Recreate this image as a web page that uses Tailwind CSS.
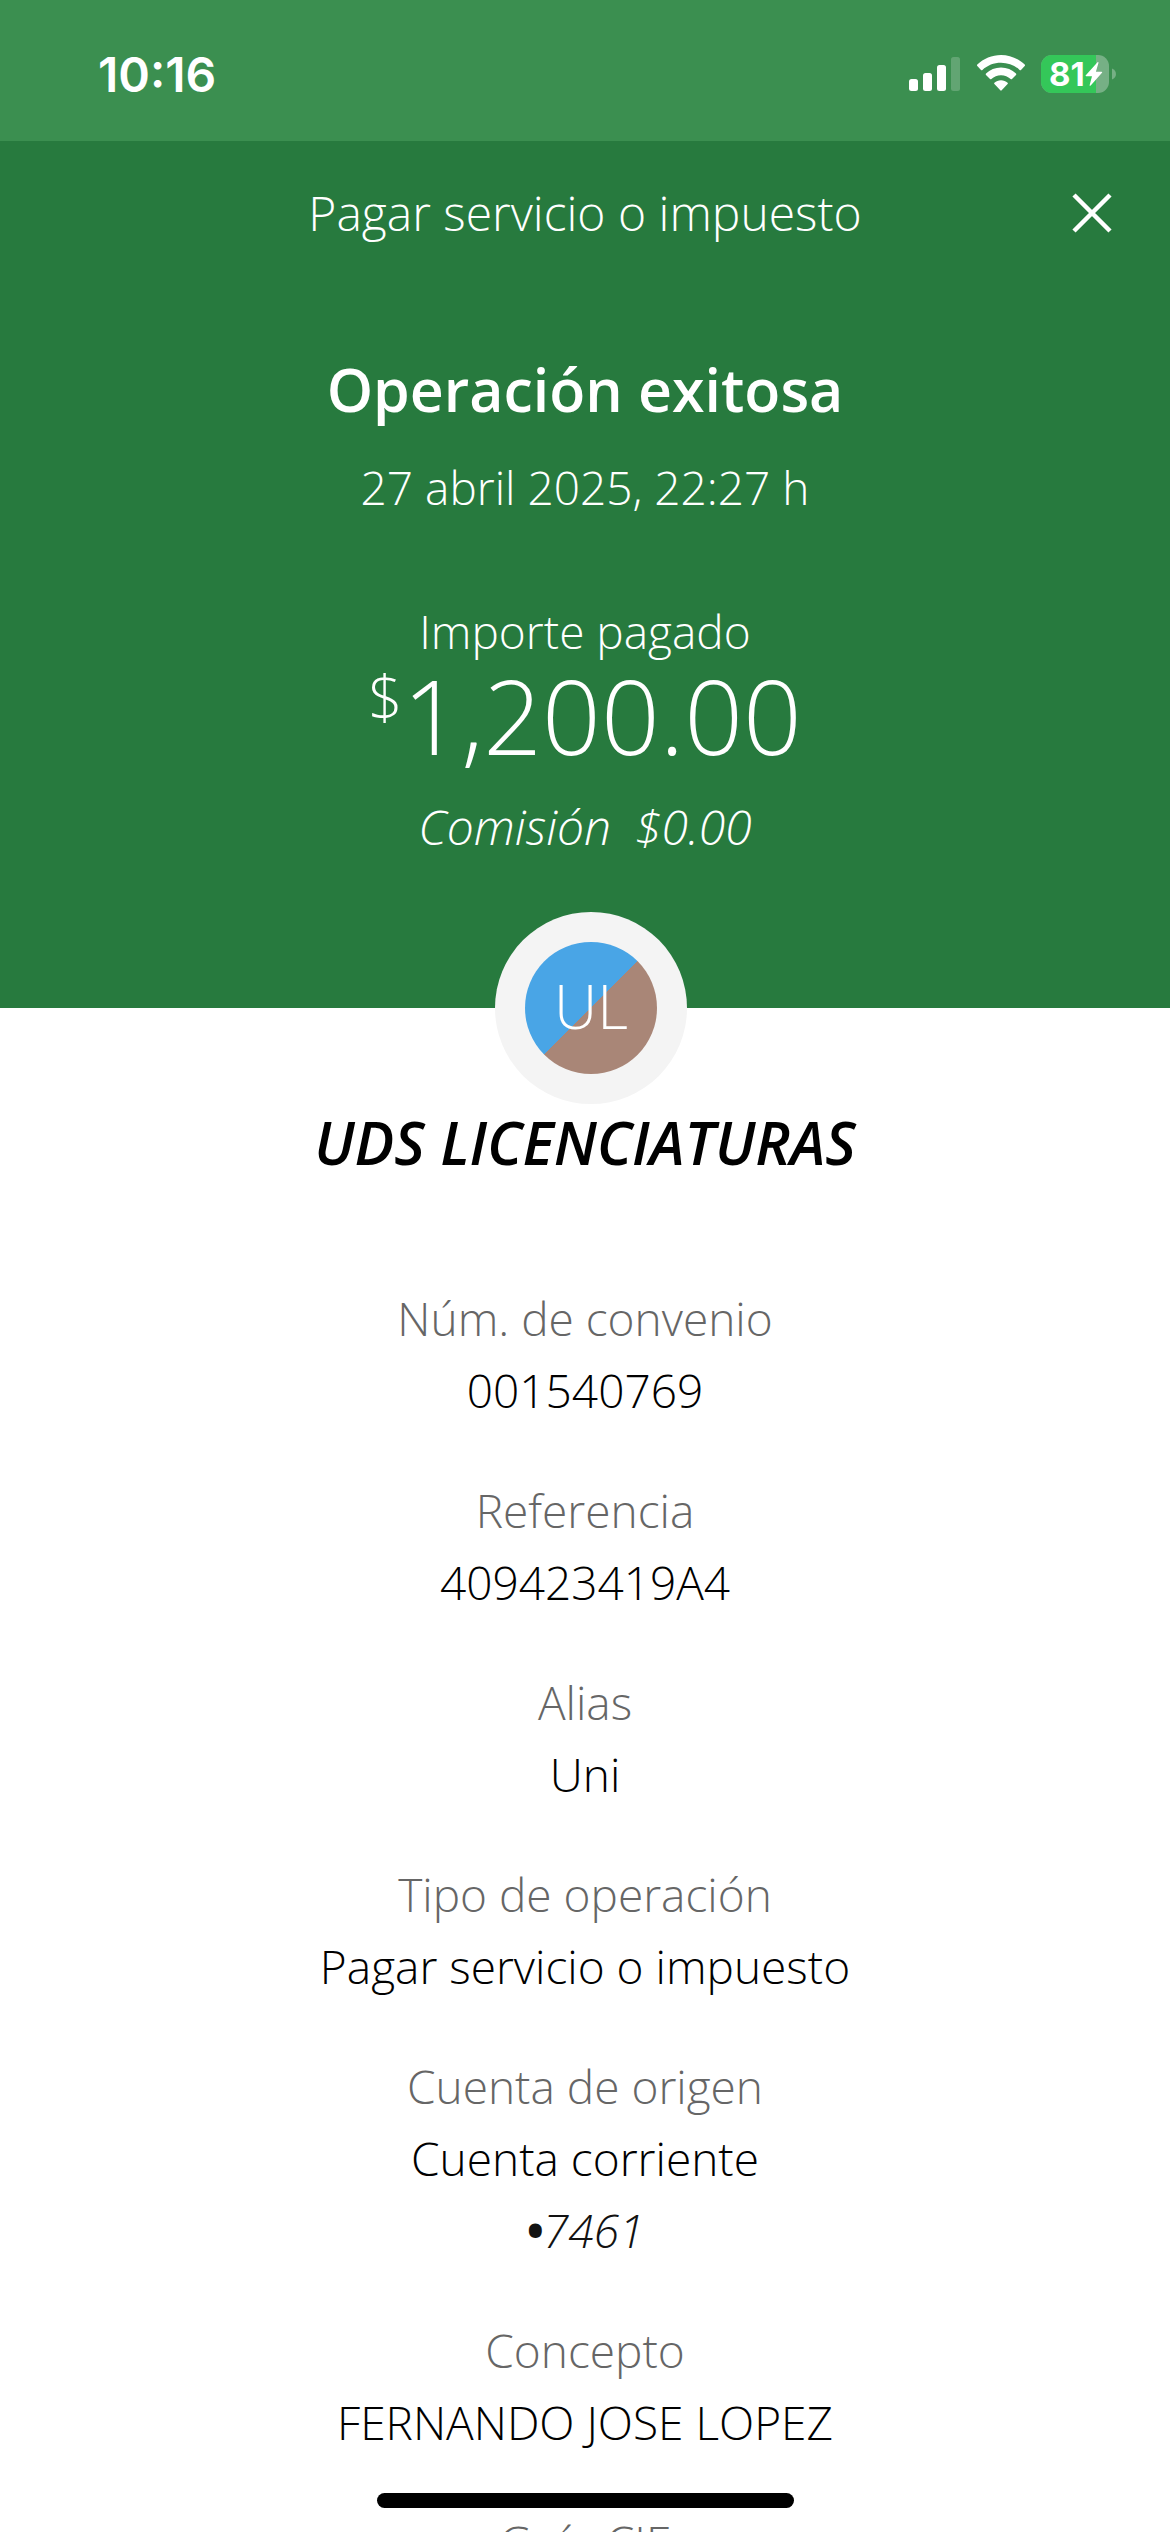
<!DOCTYPE html>
<html lang="es">
<head>
<meta charset="utf-8">
<meta name="viewport" content="width=device-width, initial-scale=1">
<title>Pagar servicio o impuesto</title>
<script src="https://cdn.jsdelivr.net/npm/@tailwindcss/browser@4"></script>
</head>
<body class="bg-white">
<div class="h-screen overflow-y-auto [scrollbar-width:none] bg-white text-black font-['Open_Sans',sans-serif] font-light text-[46px] leading-[72px] text-center">

  <!-- Status bar -->
  <div class="h-[141px] bg-[#3b8f50] text-white flex items-start justify-between pl-[98px] pr-[54px] pt-[55px] font-['Inter',sans-serif]">
    <span class="text-[48px] leading-10 font-semibold">10:16</span>
    <div class="flex items-start">
      <svg class="w-[52px] h-[38px]" viewBox="0 0 52 38" aria-label="Señal" fill="#fff">
        <rect x="0" y="24" width="9" height="12" rx="2.5"/>
        <rect x="14" y="18" width="9" height="18" rx="2.5"/>
        <rect x="28" y="10" width="9" height="26" rx="2.5"/>
        <rect x="42" y="2" width="9" height="34" rx="2.5" opacity=".2"/>
      </svg>
      <svg class="w-12 h-[38px] ml-4" viewBox="0 0 48 38" aria-label="Wi-Fi" fill="#fff">
        <path d="M24 0C33 0 41.500 3.700 47.700 9.600Q48.400 10.300 47.700 11L44 14.900Q43.300 15.600 42.600 14.900C37.600 10.300 31.200 7.700 24 7.700S10.400 10.300 5.400 14.900Q4.700 15.600 4 14.900L.3 11Q-.4 10.300 .3 9.600C6.500 3.700 15 0 24 0Z"/>
        <path d="M24 12.600C29.800 12.600 35 14.900 39 18.600Q39.700 19.300 39 20L35 23.900Q34.300 24.600 33.600 24C31 21.700 27.700 20.300 24 20.300S17 21.700 14.400 24Q13.700 24.600 13 23.900L9 20Q8.300 19.300 9 18.600C13 14.900 18.200 12.600 24 12.600Z"/>
        <path d="M24 25.300C26.500 25.300 28.800 26.200 30.600 27.700Q31.300 28.400 30.600 29.100L24.700 35.300Q24 36 23.300 35.300L17.400 29.100Q16.700 28.400 17.400 27.700C19.200 26.200 21.500 25.300 24 25.300Z"/>
      </svg>
      <div class="relative w-[68px] h-[38px] ml-4 rounded-[11px] overflow-hidden bg-[#76b085]">
        <div class="h-full bg-[#34c759]" style="width:81%"></div>
        <div class="absolute inset-0 flex items-center pl-2">
          <span class="text-[33px] leading-[38px] font-bold">81</span>
          <svg class="w-[18px] h-6" viewBox="0 0 18 24" fill="#fff"><path d="M12.500 .2 .8 13.200Q.2 14.200 1.200 14.200H7L4.600 23.200Q4.800 24.300 5.700 23.500L17 10.800Q17.600 9.800 16.600 9.800H10.900L13.500 .8Q13.400-.4 12.500 .2Z"/></svg>
        </div>
      </div>
      <svg class="w-1 h-[38px] ml-[3px]" viewBox="0 0 4 38" fill="#76b085"><path d="M0 13.500C5.300 15.500 5.300 22.500 0 24.500Z"/></svg>
    </div>
  </div>

  <!-- Result header -->
  <header class="bg-[#277a3e] text-white pb-[145px]">
    <div class="h-36 px-[58px] grid grid-cols-[40px_1fr_40px] items-center">
      <span></span>
      <h1 class="text-[48px] font-light">Pagar servicio o impuesto</h1>
      <button type="button" aria-label="Cerrar">
        <svg class="w-10 h-10" viewBox="0 0 40 40" fill="none" stroke="#fff" stroke-width="4.500"><path d="M2 2 38 38M38 2 2 38"/></svg>
      </button>
    </div>
    <h2 class="mt-[62px] text-[59px] leading-[84px] font-semibold">Operación exitosa</h2>
    <p class="mt-5">27 abril 2025, 22:27 h</p>
    <p class="mt-[72px]">Importe pagado</p>
    <p class="flex justify-center items-start text-[103px] leading-24"><span class="text-[60px] leading-[60px]">$</span>1,200.00</p>
    <p class="mt-7 text-[48px] italic flex justify-center gap-6"><span>Comisión</span><span>$0.00</span></p>
  </header>

  <main>
    <div class="relative -mt-24 pl-3 flex justify-center">
      <div class="size-48 rounded-full bg-[#f4f4f4] flex items-center justify-center">
        <div class="size-[132px] pb-1 rounded-full bg-linear-[135deg,#49a5e6_50%,#a98677_50%] flex items-center justify-center text-white text-[60px] leading-none">UL</div>
      </div>
    </div>
    <h3 class="mt-0.5 text-[59px] font-semibold italic">UDS LICENCIATURAS</h3>

    <dl class="mt-26 pb-24 flex flex-col gap-12 [&_dt]:text-[#666]">
      <div><dt>Núm. de convenio</dt><dd>001540769</dd></div>
      <div><dt>Referencia</dt><dd>409423419A4</dd></div>
      <div><dt>Alias</dt><dd>Uni</dd></div>
      <div><dt>Tipo de operación</dt><dd>Pagar servicio o impuesto</dd></div>
      <div><dt>Cuenta de origen</dt><dd>Cuenta corriente</dd><dd class="italic text-[#121212]"><span class="font-bold">•</span>7461</dd></div>
      <div><dt>Concepto</dt><dd>FERNANDO JOSE LOPEZ</dd></div>
      <div><dt>Guía CIE</dt></div>
    </dl>
  </main>
</div>

<!-- Home indicator -->
<div class="fixed inset-x-0 bottom-6 flex justify-center"><div class="w-[417px] h-[15px] rounded-full bg-black"></div></div>
</body>
</html>
